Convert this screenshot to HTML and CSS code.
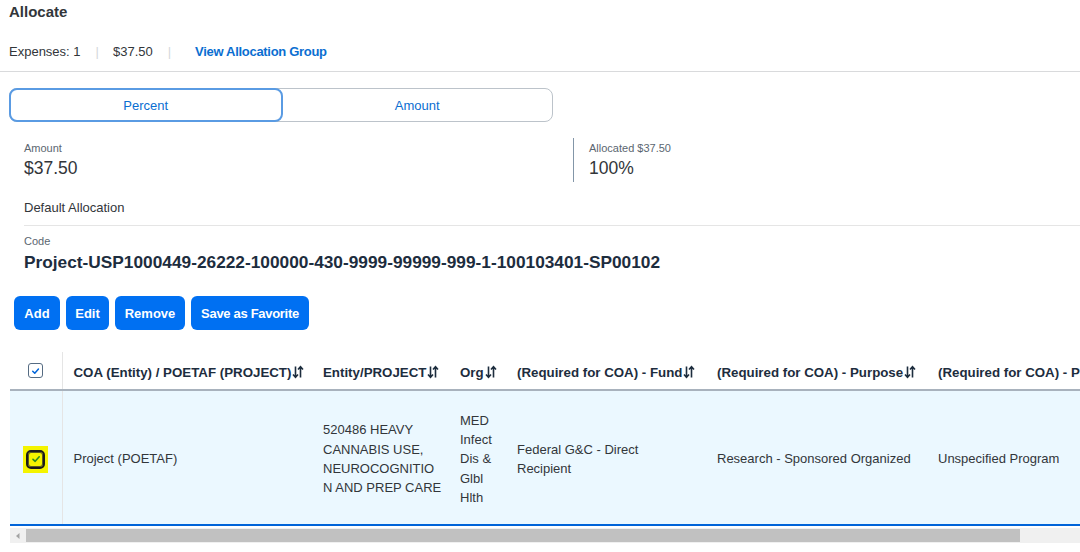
FILE: index.html
```html
<!DOCTYPE html>
<html>
<head>
<meta charset="utf-8">
<link rel="stylesheet" href="styles.css">
</head>
<body>
<div class="top">
  <div class="title">Allocate</div>
  <div class="meta">
    <span>Expenses: 1</span>
    <span class="sep">|</span>
    <span>$37.50</span>
    <span class="sep sep2">|</span>
    <a class="link">View Allocation Group</a>
  </div>
</div>

<div class="segment">
  <div class="seg seg-on">Percent</div>
  <div class="seg">Amount</div>
</div>

<div class="summary">
  <div class="sum-col sum-left">
    <div class="lbl">Amount</div>
    <div class="val">$37.50</div>
  </div>
  <div class="sum-col sum-right">
    <div class="lbl">Allocated $37.50</div>
    <div class="val">100%</div>
  </div>
</div>

<div class="details">
  <div class="default">Default Allocation</div>
  <div class="lbl code-lbl">Code</div>
  <div class="code">Project-USP1000449-26222-100000-430-9999-99999-999-1-100103401-SP00102</div>
</div>

<div class="actions">
  <button class="btn b-add">Add</button>
  <button class="btn b-edit">Edit</button>
  <button class="btn b-rem">Remove</button>
  <button class="btn b-fav">Save as Favorite</button>
</div>

<div class="grid-wrap">
  <table class="grid">
    <colgroup>
      <col class="c0"><col class="c1"><col class="c2"><col class="c3"><col class="c4"><col class="c5"><col class="c6">
    </colgroup>
    <thead>
      <tr>
        <th class="chk-cell"><span class="cb"><svg viewBox="0 0 14 14" width="14" height="14"><path d="M4 7.3 L6.2 9.3 L10.2 4.8" fill="none" stroke="#0064d9" stroke-width="1.6" stroke-linecap="round" stroke-linejoin="round"/></svg></span></th>
        <th>COA (Entity) / POETAF (PROJECT)<svg class="sort" viewBox="0 0 12 14" width="12" height="14"><path d="M3.5 1.5 V12 M1 9.5 L3.5 12.2 L6 9.5" fill="none" stroke="#1d2d3e" stroke-width="1.6"/><path d="M8.5 12.5 V2 M6 4.5 L8.5 1.8 L11 4.5" fill="none" stroke="#1d2d3e" stroke-width="1.6"/></svg></th>
        <th>Entity/PROJECT<svg class="sort" viewBox="0 0 12 14" width="12" height="14"><path d="M3.5 1.5 V12 M1 9.5 L3.5 12.2 L6 9.5" fill="none" stroke="#1d2d3e" stroke-width="1.6"/><path d="M8.5 12.5 V2 M6 4.5 L8.5 1.8 L11 4.5" fill="none" stroke="#1d2d3e" stroke-width="1.6"/></svg></th>
        <th>Org<svg class="sort" viewBox="0 0 12 14" width="12" height="14"><path d="M3.5 1.5 V12 M1 9.5 L3.5 12.2 L6 9.5" fill="none" stroke="#1d2d3e" stroke-width="1.6"/><path d="M8.5 12.5 V2 M6 4.5 L8.5 1.8 L11 4.5" fill="none" stroke="#1d2d3e" stroke-width="1.6"/></svg></th>
        <th>(Required for COA) - Fund<svg class="sort" viewBox="0 0 12 14" width="12" height="14"><path d="M3.5 1.5 V12 M1 9.5 L3.5 12.2 L6 9.5" fill="none" stroke="#1d2d3e" stroke-width="1.6"/><path d="M8.5 12.5 V2 M6 4.5 L8.5 1.8 L11 4.5" fill="none" stroke="#1d2d3e" stroke-width="1.6"/></svg></th>
        <th>(Required for COA) - Purpose<svg class="sort" viewBox="0 0 12 14" width="12" height="14"><path d="M3.5 1.5 V12 M1 9.5 L3.5 12.2 L6 9.5" fill="none" stroke="#1d2d3e" stroke-width="1.6"/><path d="M8.5 12.5 V2 M6 4.5 L8.5 1.8 L11 4.5" fill="none" stroke="#1d2d3e" stroke-width="1.6"/></svg></th>
        <th>(Required for COA) - Program</th>
      </tr>
    </thead>
    <tbody>
      <tr class="sel">
        <td class="chk-cell"><span class="hl"><span class="cb cb-focus"><svg viewBox="0 0 14 14" width="14" height="14"><path d="M4 7.3 L6.2 9.3 L10.2 4.8" fill="none" stroke="#2b8a1f" stroke-width="1.6" stroke-linecap="round" stroke-linejoin="round"/></svg></span></span></td>
        <td>Project (POETAF)</td>
        <td class="nw">520486 HEAVY<br>CANNABIS USE,<br>NEUROCOGNITIO<br>N AND PREP CARE</td>
        <td class="nw">MED<br>Infect<br>Dis &amp;<br>Glbl<br>Hlth</td>
        <td>Federal G&amp;C - Direct<br>Recipient</td>
        <td>Research - Sponsored Organized</td>
        <td>Unspecified Program</td>
      </tr>
    </tbody>
  </table>
  <div class="hscroll">
    <div class="arrow"><svg viewBox="0 0 16 14" width="16" height="14"><path d="M9.5 4 L6 7 L9.5 10 Z" fill="#a3a3a3"/></svg></div>
    <div class="thumb"></div>
  </div>
</div>
</body>
</html>
```

FILE: styles.css
```css
* { box-sizing: border-box; }
html, body { margin: 0; padding: 0; background: #ffffff; }
body {
  font-family: "Liberation Sans", Arial, sans-serif;
  color: #32363a;
  font-size: 13px;
  width: 1080px;
  height: 552px;
  overflow: hidden;
}

.top {
  border-bottom: 1px solid #d9dadc;
  padding: 0 9px 8px 9px;
}
.title {
  height: 24px;
  line-height: 24px;
  font-size: 15px;
  font-weight: bold;
  color: #32363a;
}
.meta {
  margin-top: 17px;
  height: 22px;
  line-height: 22px;
  display: flex;
  align-items: center;
  font-size: 13px;
  color: #32363a;
}
.sep {
  color: #d4d7da;
  margin: 0 14px 0 15px;
}
.sep2 { margin-right: 24px; }
.link {
  color: #0a6ed1;
  font-weight: bold;
  letter-spacing: -0.3px;
}

.segment {
  margin: 16px 0 0 9px;
  width: 544px;
  height: 34px;
  display: flex;
  border: 1px solid #bcc3ca;
  border-radius: 8px;
}
.seg {
  flex: 1;
  display: flex;
  align-items: center;
  justify-content: center;
  color: #0a6ed1;
  font-size: 13px;
}
.seg-on {
  margin: -1px 0 -1px -1px;
  border: 2px solid #5a9be3;
  border-radius: 8px;
}

.summary {
  margin-top: 16px;
  display: flex;
  height: 44px;
}
.sum-col { height: 44px; padding-top: 3px; }
.sum-left { width: 573px; padding-left: 24px; }
.sum-right { border-left: 1px solid #8396a8; padding-left: 15px; }
.lbl {
  font-size: 11px;
  line-height: 14px;
  color: #5b6670;
}
.val {
  font-size: 17.5px;
  line-height: 26px;
  color: #32363a;
}

.details {
  margin-left: 24px;
}
.default {
  margin-top: 16px;
  height: 28px;
  line-height: 20px;
  border-bottom: 1px solid #e5e5e5;
  font-size: 13px;
}
.code-lbl { margin-top: 8px; }
.code {
  margin-top: 2px;
  font-size: 17.3px;
  line-height: 24px;
  font-weight: bold;
  color: #1d2d3e;
  white-space: nowrap;
}

.actions {
  margin: 22px 0 0 14px;
  display: flex;
  gap: 6px;
}
.btn {
  height: 34px;
  border: none;
  border-radius: 6px;
  background: #0070f2;
  color: #ffffff;
  font-family: inherit;
  font-size: 13px;
  font-weight: bold;
  padding: 0;
  white-space: nowrap;
}
.b-add { width: 46px; }
.b-edit { width: 43px; }
.b-rem { width: 70px; }
.b-fav { width: 118px; letter-spacing: -0.3px; }

.grid-wrap {
  margin: 22px 0 0 10px;
  width: 1070px;
  overflow: hidden;
}
.grid {
  border-collapse: collapse;
  table-layout: fixed;
  width: 1230px;
}
.c0 { width: 52px; }
.c1 { width: 250px; }
.c2 { width: 137px; }
.c3 { width: 57px; }
.c4 { width: 200px; }
.c5 { width: 221px; }
.c6 { width: 313px; }
.grid th {
  height: 38px;
  text-align: left;
  font-size: 13.3px;
  font-weight: bold;
  color: #1d2d3e;
  padding: 3px 11px 0 11px;
  white-space: nowrap;
  overflow: hidden;
  border-bottom: 2px solid #a8b2bd;
}
.sort {
  vertical-align: -2px;
  margin-left: 1px;
}
.grid td {
  height: 135px;
  padding: 3px 11px 0 11px;
  font-size: 13px;
  line-height: 19.3px;
  color: #32363a;
  vertical-align: middle;
  background: #ebf8ff;
  border-bottom: 2px solid #0064d9;
}
.grid td.nw { white-space: nowrap; overflow: visible; }
.grid th.chk-cell, .grid td.chk-cell {
  padding: 0;
  text-align: center;
  border-right: 1px solid #e5e5e5;
}
.grid td.chk-cell { padding-top: 3px; }
.cb {
  display: inline-flex;
  align-items: center;
  justify-content: center;
  width: 15px;
  height: 15px;
  border: 1px solid #556b82;
  border-radius: 3px;
  vertical-align: middle;
  background: #ffffff;
}
.hl {
  display: inline-flex;
  align-items: center;
  justify-content: center;
  width: 25px;
  height: 27px;
  background: #f4f400;
  vertical-align: middle;
}
.cb-focus {
  width: 19px;
  height: 19px;
  background: #f4f400;
  border: 2px solid #1a1a1a;
  border-radius: 5px;
  box-shadow: inset 0 0 0 1px #5a5a20;
}

.hscroll {
  margin-top: 2px;
  height: 15px;
  background: #f0f0f0;
  display: flex;
  align-items: center;
}
.arrow {
  width: 16px;
  height: 15px;
  display: flex;
  align-items: center;
}
.thumb {
  width: 994px;
  height: 13px;
  background: #c1c1c1;
}
```
